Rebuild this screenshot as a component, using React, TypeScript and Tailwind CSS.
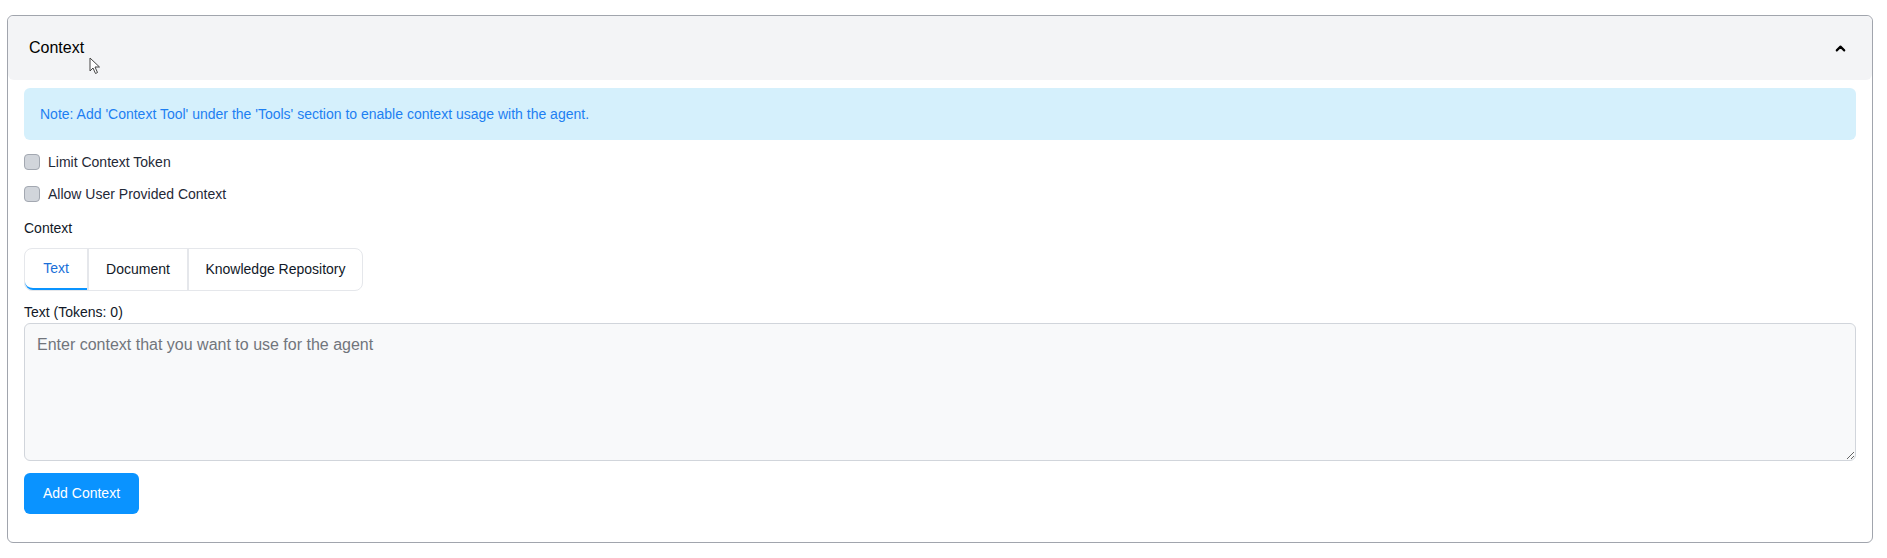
import React, { useState } from "react";
import { ChevronUp } from "lucide-react";

const tabs = ["Text", "Document", "Knowledge Repository"];
const tabWidths = ["w-[62px]", "w-[100px]", "w-[175px]"];

function Check({ label }: { label: string }) {
  return (
    <label className="flex h-[32px] items-center gap-2 text-[14px] text-[#1f2937]">
      <span className="h-4 w-4 rounded-[4px] border border-[#a3a8b1] bg-[#d1d5db]" />
      {label}
    </label>
  );
}

export default function App() {
  const [active, setActive] = useState(0);

  return (
    <div
      className="min-h-[558px] bg-white pl-[7px] pr-[14px] pt-[15px]"
      style={{ fontFamily: '"Liberation Sans", Arial, sans-serif' }}
    >
      <div className="relative rounded-md border border-[#a1a5ad] bg-white">
        {/* header */}
        <div className="flex h-[64px] items-center justify-between rounded-md bg-[#f3f4f6] pl-[21px] pr-[24px]">
          <span className="text-base text-black">Context</span>
          <ChevronUp className="h-[15px] w-[15px] text-black" strokeWidth={3.4} />
        </div>

        {/* mouse pointer from the capture */}
        <svg className="absolute left-[81px] top-[41px]" width="12" height="19" viewBox="0 0 12 19">
          <path d="M1 1 L1 14 L4 11 L6.5 16.5 L8.5 15.5 L6 10 L10.5 10 Z" fill="white" stroke="#444" strokeWidth="1" strokeLinejoin="round" />
        </svg>

        <div className="px-4 pb-[28px] pt-2">
          <div className="flex h-[52px] items-center rounded-md bg-[#d5f0fc] px-4 text-[14px] text-[#1d7ff2]">
            Note: Add 'Context Tool' under the 'Tools' section to enable context usage with the agent.
          </div>

          <div className="mt-[6px]">
            <Check label="Limit Context Token" />
            <Check label="Allow User Provided Context" />
          </div>

          <div className="mt-2 flex h-5 items-center text-[14px] text-[#111827]">Context</div>

          <div className="mt-[10px] inline-flex h-[43px] rounded-lg border border-[#e5e7eb]">
            {tabs.map((t, i) => (
              <button
                key={t}
                onClick={() => setActive(i)}
                className={
                  tabWidths[i] +
                  " flex items-center justify-center text-[14px] " +
                  (i > 0 ? "border-l-2 border-[#e5e7eb] " : "") +
                  (active === i
                    ? "rounded-bl-lg border-b-2 border-b-[#0a94ff] text-[#1a6fd8]"
                    : "text-[#111827]")
                }
              >
                {t}
              </button>
            ))}
          </div>

          <div className="mt-[11px] flex h-5 items-center text-[14px] text-[#111827]">Text (Tokens: 0)</div>
          <textarea
            placeholder="Enter context that you want to use for the agent"
            className="mt-px block h-[138px] w-full rounded-md border border-[#d1d5db] bg-[#f8f9fa] px-3 pt-[9px] text-base placeholder:text-[#71757c] focus:outline-none"
          />

          <button className="mt-3 h-[41px] w-[115px] rounded-md bg-[#0a93ff] text-[14px] text-white">
            Add Context
          </button>
        </div>
      </div>
    </div>
  );
}
